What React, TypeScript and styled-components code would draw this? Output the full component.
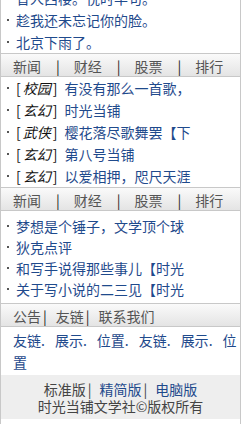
import styled, { createGlobalStyle } from 'styled-components';

const GlobalStyle = createGlobalStyle`
    html, body {
        margin: 0;
        padding: 0;
        overflow: hidden;
        background: #fff;
    }
    body {
        font-family: "Noto Sans CJK SC", "Liberation Sans", sans-serif;
        font-size: 14px;
    }
    a {
        text-decoration: none;
    }
`;

const Page = styled.div`
    width: 241px;
    box-sizing: border-box;
    border-left: 1px solid #c8c8c8;
    border-right: 1px solid #c8c8c8;
    margin-top: -13px;
`;

const List = styled.ul<{ $pad?: number; $row?: number }>`
    list-style: none;
    margin: 0;
    padding: ${(p) => p.$pad || 0}px 0 ${(p) => p.$pad || 0}px 4px;
    li {
        display: flex;
        align-items: center;
        height: ${(p) => p.$row || 22}px;
        white-space: nowrap;
        overflow: hidden;
    }
    li::before {
        content: '';
        width: 2px;
        height: 2px;
        margin: 0 7px 0 2px;
        background: #555;
        flex: none;
    }
`;

const Item = styled.a`
    color: #1f4a8c;
`;

const Tag = styled.span`
    color: #111;
    margin-right: 7px;
    em {
        font-style: italic;
        margin: 0 2px;
    }
`;

const Nav = styled.div`
    display: flex;
    align-items: center;
    box-sizing: border-box;
    height: 24px;
    padding: 2px 0 0 12px;
    border-top: 1px solid #c8c8c8;
    border-bottom: 1px solid #c8c8c8;
    background: linear-gradient(#fafafa, #e4e4e4);
    color: #555;
`;

const NavLink = styled.a`
    color: #555;
`;

const Sep = styled.span<{ $wide?: boolean }>`
    color: #222;
    margin: ${(p) => (p.$wide ? '0 14px 0 15px' : '0 9px 0 2px')};
`;

const Friends = styled.div`
    padding: 2px 0 2px 12px;
    line-height: 22px;
    a {
        color: #1f4a8c;
    }
`;

const Dot = styled.span`
    color: #1f4a8c;
    margin-right: 10px;
`;

const Footer = styled.div`
    background: #eeeeee;
    padding: 6px 0 4px;
    text-align: center;
    line-height: 17px;
    color: #444;
    a {
        color: #1f4a8c;
    }
`;

const FootSep = styled.span`
    margin: 0 8px 0 2px;
`;

const Notice = styled.div`
    padding: 4px 0 0 15px;
    color: #c0156e;
    line-height: 17px;
`;

type Row = { tag?: string; text: string };

const top: Row[] = [
    { text: '昔人西楼。悦时华句。' },
    { text: '趁我还未忘记你的脸。' },
    { text: '北京下雨了。' },
];

const books: Row[] = [
    { tag: '校园', text: '有没有那么一首歌，' },
    { tag: '玄幻', text: '时光当铺' },
    { tag: '武侠', text: '樱花落尽歌舞罢【下' },
    { tag: '玄幻', text: '第八号当铺' },
    { tag: '玄幻', text: '以爱相押，咫尺天涯' },
];

const essays: Row[] = [
    { text: '梦想是个锤子，文学顶个球' },
    { text: '狄克点评' },
    { text: '和写手说得那些事儿【时光' },
    { text: '关于写小说的二三见【时光' },
];

const channels = ['新闻', '财经', '股票', '排行'];

const Rows = ({ rows, pad, row }: { rows: Row[]; pad?: number; row?: number }) => (
    <List $pad={pad} $row={row}>
        {rows.map((r, i) => (
            <li key={i}>
                {r.tag && (
                    <Tag>
                        [<em>{r.tag}</em>]
                    </Tag>
                )}
                <Item href="#">{r.text}</Item>
            </li>
        ))}
    </List>
);

const Channels = () => (
    <Nav>
        {channels.map((c, i) => (
            <span key={c}>
                <NavLink href="#">{c}</NavLink>
                {i < channels.length - 1 && <Sep $wide>|</Sep>}
            </span>
        ))}
    </Nav>
);

const App = () => {
    const friends = ['友链', '展示', '位置', '友链', '展示', '位置'];
    return (
        <>
            <GlobalStyle />
            <Page>
                <Rows rows={top} />
                <Channels />
                <Rows rows={books} />
                <Channels />
                <Rows rows={essays} pad={4} row={21} />
                <Nav>
                    <NavLink href="#">公告</NavLink>
                    <Sep>|</Sep>
                    <NavLink href="#">友链</NavLink>
                    <Sep>|</Sep>
                    <NavLink href="#">联系我们</NavLink>
                </Nav>
                <Friends>
                    {friends.map((f, i) => (
                        <span key={i}>
                            <a href="#">{f}</a>
                            {i < friends.length - 1 && <Dot>.</Dot>}
                        </span>
                    ))}
                </Friends>
                <Footer>
                    <div>
                        标准版<FootSep>|</FootSep>
                        <a href="#">精简版</a>
                        <FootSep>|</FootSep>
                        <a href="#">电脑版</a>
                    </div>
                    <div>时光当铺文学社©版权所有</div>
                </Footer>
                <Notice>页面访问</Notice>
            </Page>
        </>
    );
};

export default App;
